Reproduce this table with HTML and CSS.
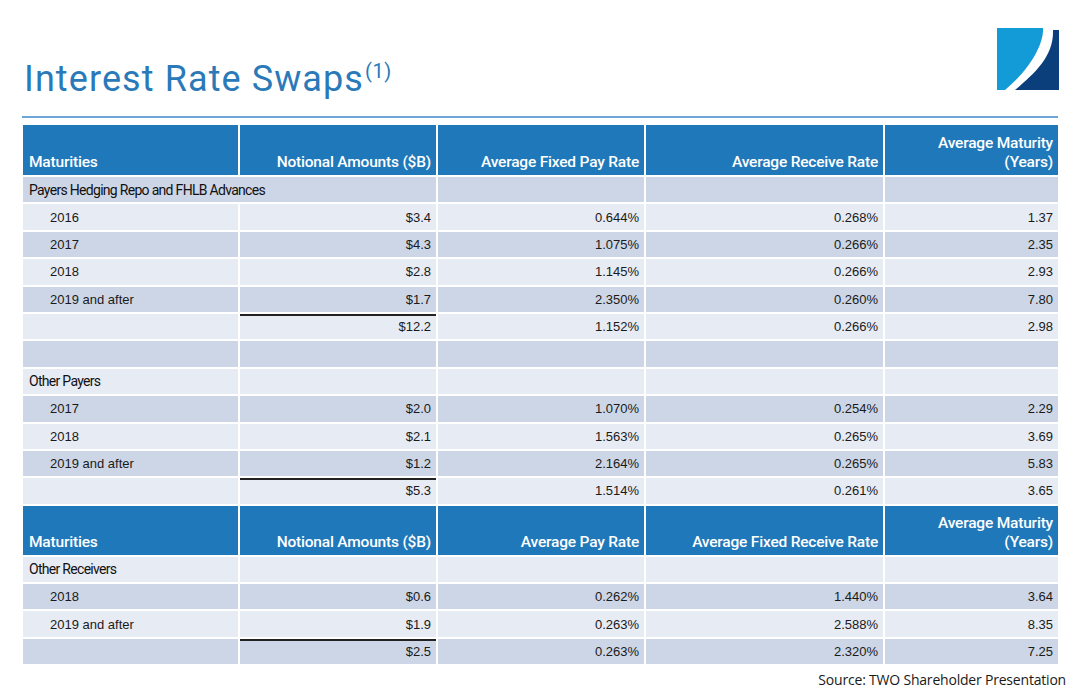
FILE: index.html
```html
<!DOCTYPE html>
<html>
<head>
<meta charset="utf-8">
<link rel="stylesheet" href="styles.css">
</head>
<body>
<div class="slide">
  <header class="top">
    <h1 class="title">Interest Rate Swaps<sup class="note">(1)</sup></h1>
    <svg class="logo" width="62" height="62" viewBox="0 0 62 62">
      <path d="M0,0 H46 C47,18 30,44 8,62 H0 Z" fill="#139bd7"/>
      <path d="M56,2 H62 V62 H18 C38,45 57,28 56,2 Z" fill="#0b3f7c"/>
    </svg>
  </header>
  <div class="rule"></div>
  <table class="swaps">
    <colgroup>
      <col class="c1"><col class="c2"><col class="c3"><col class="c4"><col class="c5">
    </colgroup>
    <tr class="head">
      <th class="left">Maturities</th>
      <th>Notional Amounts ($B)</th>
      <th>Average Fixed Pay Rate</th>
      <th>Average Receive Rate</th>
      <th>Average Maturity<br>(Years)</th>
    </tr>
    <tr class="dark cat"><td colspan="2">Payers Hedging Repo and FHLB Advances</td><td></td><td></td><td></td></tr>
    <tr class="light"><td class="yr">2016</td><td>$3.4</td><td>0.644%</td><td>0.268%</td><td>1.37</td></tr>
    <tr class="dark"><td class="yr">2017</td><td>$4.3</td><td>1.075%</td><td>0.266%</td><td>2.35</td></tr>
    <tr class="light"><td class="yr">2018</td><td>$2.8</td><td>1.145%</td><td>0.266%</td><td>2.93</td></tr>
    <tr class="dark"><td class="yr">2019 and after</td><td>$1.7</td><td>2.350%</td><td>0.260%</td><td>7.80</td></tr>
    <tr class="light"><td></td><td class="sum">$12.2</td><td>1.152%</td><td>0.266%</td><td>2.98</td></tr>
    <tr class="dark"><td></td><td></td><td></td><td></td><td></td></tr>
    <tr class="light cat"><td>Other Payers</td><td></td><td></td><td></td><td></td></tr>
    <tr class="dark"><td class="yr">2017</td><td>$2.0</td><td>1.070%</td><td>0.254%</td><td>2.29</td></tr>
    <tr class="light"><td class="yr">2018</td><td>$2.1</td><td>1.563%</td><td>0.265%</td><td>3.69</td></tr>
    <tr class="dark"><td class="yr">2019 and after</td><td>$1.2</td><td>2.164%</td><td>0.265%</td><td>5.83</td></tr>
    <tr class="light"><td></td><td class="sum">$5.3</td><td>1.514%</td><td>0.261%</td><td>3.65</td></tr>
    <tr class="head head2">
      <th class="left">Maturities</th>
      <th>Notional Amounts ($B)</th>
      <th>Average Pay Rate</th>
      <th>Average Fixed Receive Rate</th>
      <th>Average Maturity<br>(Years)</th>
    </tr>
    <tr class="light cat"><td>Other Receivers</td><td></td><td></td><td></td><td></td></tr>
    <tr class="dark"><td class="yr">2018</td><td>$0.6</td><td>0.262%</td><td>1.440%</td><td>3.64</td></tr>
    <tr class="light"><td class="yr">2019 and after</td><td>$1.9</td><td>0.263%</td><td>2.588%</td><td>8.35</td></tr>
    <tr class="dark"><td></td><td class="sum">$2.5</td><td>0.263%</td><td>2.320%</td><td>7.25</td></tr>
  </table>
  <p class="source">Source: TWO Shareholder Presentation</p>
</div>
</body>
</html>
```
FILE: styles.css
```css
html, body {
  margin: 0;
  padding: 0;
  background: #ffffff;
}

.slide {
  width: 1074px;
  height: 694px;
  position: relative;
  overflow: hidden;
}

.top {
  display: flex;
  justify-content: space-between;
  align-items: flex-start;
  padding: 28px 15px 0 24px;
  height: 84px;
  box-sizing: border-box;
}

.title {
  margin: 30px 0 0 0;
  font-family: Roboto, "Liberation Sans", sans-serif;
  font-weight: 400;
  font-size: 36px;
  line-height: 42px;
  color: #2a7ab9;
  letter-spacing: 1.1px;
}

.note {
  font-size: 20px;
  line-height: 20px;
  vertical-align: baseline;
  position: relative;
  top: -13px;
  margin-left: 1px;
  letter-spacing: 0.5px;
}

.logo {
  display: block;
}

.rule {
  margin: 32px 16px 0 22px;
  height: 2px;
  background: #6ea6d8;
}

.swaps {
  margin: 5px 0 0 21px;
  border-collapse: separate;
  border-spacing: 2px;
  table-layout: fixed;
  width: 1039px;
}

.c1 { width: 215px; }
.c2 { width: 196px; }
.c3 { width: 206px; }
.c4 { width: 237px; }
.c5 { width: 173px; }

.swaps td, .swaps th {
  padding: 0 5px 0 6px;
  text-align: right;
  font-family: "Liberation Sans", Arial, sans-serif;
  font-size: 13px;
  color: #1a1a1a;
  white-space: nowrap;
  overflow: hidden;
}

.swaps tr { height: 25.4px; }

.dark td { background: #cdd6e6; }
.light td { background: #e7ebf4; }

.swaps td.yr {
  text-align: left;
  padding-left: 27px;
}

.swaps .cat td {
  text-align: left;
  font-family: Roboto, "Liberation Sans", sans-serif;
  font-size: 14px;
  letter-spacing: -0.7px;
  color: #111;
}

.swaps td.sum {
  box-shadow: inset 0 2px 0 #222;
}

.swaps tr.head { height: 50px; }
.swaps tr.head2 { height: 49px; }

.swaps th {
  background: #1f78b9;
  color: #ffffff;
  font-family: Roboto, "Liberation Sans", sans-serif;
  font-weight: 500;
  font-size: 15.5px;
  line-height: 19px;
  vertical-align: bottom;
  padding-bottom: 3px;
  letter-spacing: -0.2px;
}

.swaps th.left { text-align: left; }

.source {
  margin: 4px 8px 0 0;
  text-align: right;
  font-family: "Open Sans", "DejaVu Sans", sans-serif;
  font-size: 14px;
  letter-spacing: -0.2px;
  color: #1a1a1a;
}
```
